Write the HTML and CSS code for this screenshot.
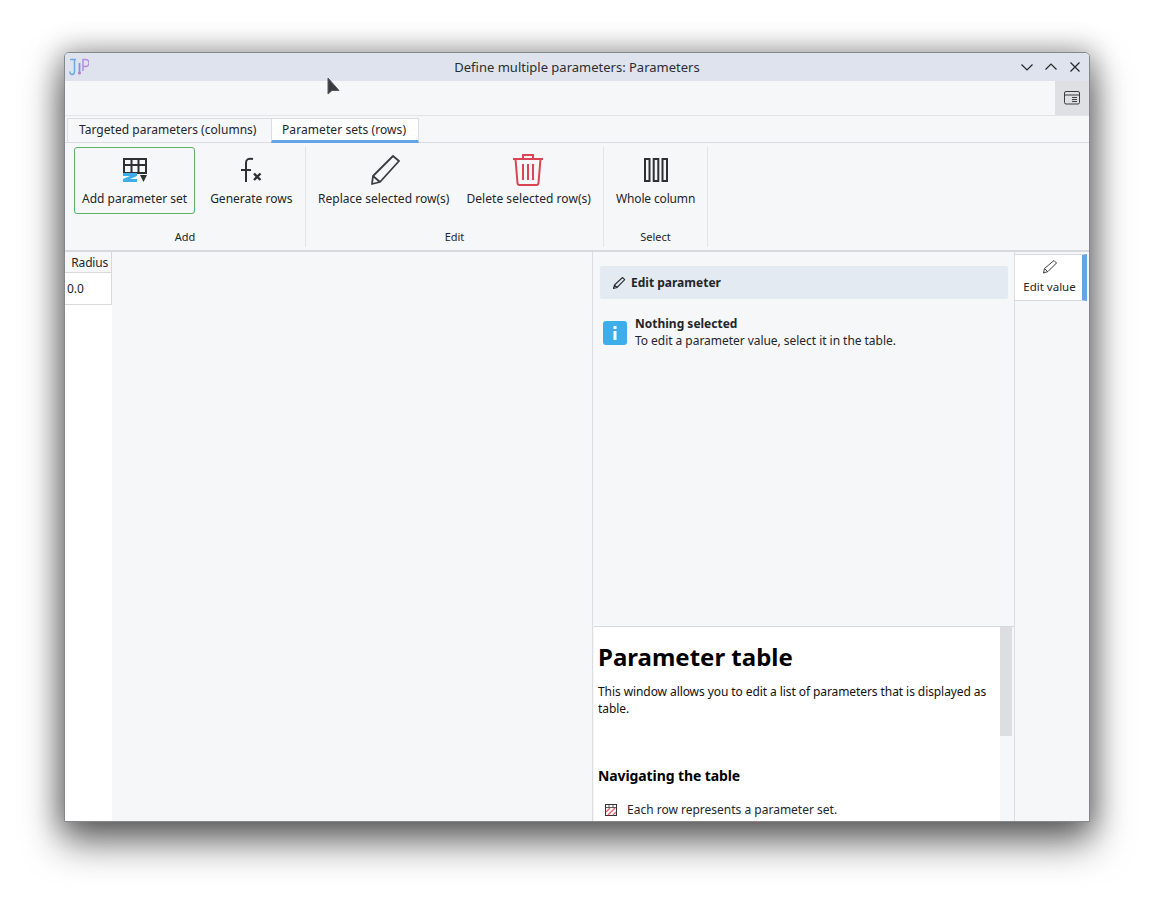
FILE: index.html
```html
<!DOCTYPE html>
<html lang="en">
<head>
<meta charset="utf-8">
<title>Define multiple parameters: Parameters</title>
<link rel="stylesheet" href="styles.css">
</head>
<body>
<div class="window">
  <header class="titlebar">
    <svg class="logo" viewBox="0 0 20 18" width="20" height="18" fill="none" stroke-width="1.500">
      <path d="M1 1.500h6M5.500 1.500v11.500q0 3.500-2.300 3.500T1 13.500" stroke="#6aa9ea"/>
      <path d="M10.500 5v9" stroke="#8f8fe0" stroke-width="1.800"/><circle cx="10.500" cy="15" r="1.500" fill="#b07ad8"/>
      <path d="M14 13V1.500h2.500a3.500 3.500 0 0 1 0 7H14" stroke="#b78ce0"/>
    </svg>
    <span class="title">Define multiple parameters: Parameters</span>
    <div class="winbtns">
      <svg viewBox="0 0 12 12" width="12" height="12"><path d="M.5 3.500 6 9l5.500-5.500" class="wb"/></svg>
      <svg viewBox="0 0 12 12" width="12" height="12"><path d="M.5 8.500 6 3l5.500 5.500" class="wb"/></svg>
      <svg viewBox="0 0 12 12" width="12" height="12"><path d="M1.500 1.500l9 9M10.500 1.500l-9 9" class="wb"/></svg>
    </div>
  </header>
  <div class="strip">
    <div class="stripbtn">
      <svg viewBox="0 0 16 14" width="16" height="14" fill="none" stroke="#3a3d42"><rect x=".5" y=".5" width="15" height="12.500" rx="1.500"/><path d="M.5 4h15M8 6.500h5M8 8.500h5M8 10.500h5"/></svg>
    </div>
  </div>
  <nav class="tabs">
    <div class="tab tab-cols">Targeted parameters (columns)</div>
    <div class="tab tab-rows">Parameter sets (rows)</div>
  </nav>
  <section class="ribbon">
    <div class="group group-add">
      <div class="btns">
        <div class="rbtn selected">
          <svg class="ic" viewBox="0 0 32 32" width="32" height="32">
            <path d="M5 5h22v14H5zM5 11h22M12.500 5v14M19.500 5v14" fill="none" stroke="#2e3033" stroke-width="2"/>
            <path d="M4 19h14v3l-7 3h7v3H4v-3l7-3H4z" fill="#3daee9"/>
            <path d="M21 21h7l-3.500 7z" fill="#2e3033"/>
          </svg>
          <span>Add parameter set</span>
        </div>
        <div class="rbtn">
          <svg class="ic" viewBox="0 0 32 32" width="32" height="32" fill="none" stroke="#2e3033" stroke-width="2">
            <path d="M18 5q-7-1.500-7 4V28M6 16h10"/><path d="M19 19.500l6.500 6.500M25.500 19.500L19 26" stroke-width="2.400"/>
          </svg>
          <span>Generate rows</span>
        </div>
      </div>
      <div class="glabel">Add</div>
    </div>
    <div class="group group-edit">
      <div class="btns">
        <div class="rbtn">
          <svg class="ic" viewBox="0 0 32 32" width="32" height="32" fill="none" stroke="#3a3c40" stroke-width="1.800" stroke-linejoin="round">
            <path d="M25 2l6 5L12 28l-8 2 1-8zM5 22l7 6"/>
          </svg>
          <span>Replace selected row(s)</span>
        </div>
        <div class="rbtn">
          <svg class="ic" viewBox="0 0 32 32" width="32" height="32" fill="none" stroke="#da4453" stroke-width="2">
            <path d="M0 5h30M2.500 5l2 24q.2 2 2 2h17q1.800 0 2-2l2-24M10 5V1h10v4M10 10v16M15 10v16M20 10v16"/>
          </svg>
          <span>Delete selected row(s)</span>
        </div>
      </div>
      <div class="glabel">Edit</div>
    </div>
    <div class="group group-select">
      <div class="btns">
        <div class="rbtn">
          <svg class="ic" viewBox="0 0 32 32" width="32" height="32" fill="none" stroke="#2e3033" stroke-width="2">
            <path d="M5 5h4.500v22H5zM13.700 5h4.600v22h-4.600zM22.500 5H27v22h-4.500z"/>
          </svg>
          <span class="whole">Whole column</span>
        </div>
      </div>
      <div class="glabel">Select</div>
    </div>
  </section>
  <main class="content">
    <div class="tablecol">
      <div class="th">Radius</div>
      <div class="td">0.0</div>
    </div>
    <div class="blank"></div>
    <div class="rightpanel">
      <div class="editpane">
        <div class="edithead">
          <svg viewBox="0 0 14 14" width="14" height="14" fill="none" stroke="#2e3033" stroke-width="1.100" stroke-linejoin="round"><path d="M10.500 1.500l2.200 2.200L5 11.500l-3.500 1 1-3.500zM2.500 9l2.500 2.500"/></svg>
          <span>Edit parameter</span>
        </div>
        <div class="notice">
          <div class="info">
            <svg viewBox="0 0 24 24" width="24" height="24"><rect width="24" height="24" rx="3" fill="#3daee9"/><rect x="10.500" y="10" width="3" height="9" fill="#fff"/><rect x="10.500" y="5" width="3" height="3" fill="#fff"/></svg>
          </div>
          <div class="noticetext">
            <strong>Nothing selected</strong>
            <span class="noticebody">To edit a parameter value, select it in the table.</span>
          </div>
        </div>
      </div>
      <div class="help">
        <div class="helpbody">
          <h1>Parameter table</h1>
          <p>This window allows you to edit a list of parameters that is displayed as table.</p>
          <h2>Navigating the table</h2>
          <div class="li">
            <svg viewBox="0 0 12 12" width="12" height="12"><rect x=".5" y=".5" width="11" height="11" fill="#fff" stroke="#333"/><path d="M.5 3.500h11M4 .5v3M8 .5v3" stroke="#333" stroke-width=".8"/><path d="M1 8l4-4M3 11l7-7M8 11l3-3" stroke="#e8566a" stroke-width="1.300"/></svg>
            <span>Each row represents a parameter set.</span>
          </div>
        </div>
        <div class="scroll"><div class="thumb"></div></div>
      </div>
    </div>
    <aside class="sidebar">
      <div class="sidetab">
        <svg viewBox="0 0 16 16" width="16" height="16" fill="none" stroke="#3a3c40" stroke-linejoin="round"><path d="M12 1.500l2.500 2.500-8.500 8.500-4.500 1.500 1-4.500zM2.800 9.800l3 3"/></svg>
        <span>Edit value</span>
      </div>
    </aside>
  </main>
  <svg class="cursor" viewBox="0 0 14 20" width="14" height="20"><path d="M1 1v16l4-3.500h7z" fill="#3a3c40" stroke="#55585c" stroke-width="1"/></svg>
</div>
</body>
</html>
```

FILE: styles.css
```css
* { box-sizing: border-box; }
html, body { margin: 0; height: 100%; background: #fff; overflow: hidden; }
body { padding: 52px 0 0 64px; font: 12px/16px "Noto Sans", sans-serif; color: #232629; }

.window {
  position: relative;
  width: 1026px;
  height: 770px;
  display: flex;
  flex-direction: column;
  background: #f6f7f9;
  border: 1px solid #85878b;
  border-radius: 5px 5px 0 0;
  box-shadow: 0 18px 38px 2px rgba(0,0,0,.58), 0 0 26px 4px rgba(0,0,0,.25);
}

.titlebar {
  flex: 0 0 28px;
  display: flex;
  align-items: center;
  position: relative;
  background: #dee3ed;
  border-radius: 4px 4px 0 0;
  padding-left: 4px;
}
.logo { flex: none; }
.title {
  position: absolute;
  left: 0; right: 0;
  text-align: center;
  font-size: 13px;
  color: #2b2e31;
}
.winbtns { margin-left: auto; display: flex; gap: 12px; padding-right: 8px; position: relative; }
.wb { fill: none; stroke: #232629; stroke-width: 1.200; }

.strip { flex: 0 0 35px; display: flex; justify-content: flex-end; border-bottom: 1px solid #e3e4e6; }
.stripbtn { width: 34px; display: flex; align-items: center; justify-content: center; background: #dfe0e3; }

.tabs { flex: 0 0 25px; display: flex; padding: 2px 0 0 2px; align-items: stretch; position: relative; }
.tab {
  line-height: 21px;
  border: 1px solid #dcdde0;
  border-bottom: 0;
  background: #f6f7f9;
}
.tab-cols { width: 204px; border-right: 0; padding-left: 11px; letter-spacing: .03px; }
.tab-rows { width: 148px; padding-left: 10px; background: #fff; border-bottom: 3px solid #64a5e8; margin-bottom: -1px; letter-spacing: .08px; }

.ribbon {
  flex: 0 0 110px;
  display: flex;
  border-top: 1px solid #dcdde0;
  border-bottom: 2px solid #d8d9dc;
  padding-top: 3px;
}
.group {
  display: flex;
  flex-direction: column;
  border-right: 1px solid #e3e4e6;
  height: 101px;
}
.group-add { width: 241px; }
.group-add .btns { padding-left: 9px; }
.group-edit { width: 298px; }
.group-select { width: 104px; }
.btns { display: flex; flex: 1; }
.rbtn {
  display: flex;
  flex-direction: column;
  align-items: center;
  padding: 6px 8px 0;
  height: 67px;
  margin-top: 1px;
  border: 1px solid transparent;
  border-radius: 3px;
  white-space: nowrap;
}
.group-add .rbtn + .rbtn { margin-left: 6px; }
.group-edit .rbtn { margin-left: 3px; letter-spacing: .02px; }
.group-edit .rbtn + .rbtn { margin-left: -1px; letter-spacing: .05px; }
.group-select .rbtn { margin-left: 3px; }
.whole { letter-spacing: -.15px; }
.rbtn.selected { border-color: #5cb25f; padding: 6px 7px 0; }
.rbtn .ic { flex: none; margin-bottom: 5px; }
.glabel { font-size: 11px; text-align: center; padding-bottom: 2px; line-height: 16px; }

.content { flex: 1; display: flex; min-height: 0; }
.tablecol { width: 47px; background: #fff; }
.th {
  height: 21px;
  text-align: right;
  padding-right: 3px;
  letter-spacing: -.2px;
  line-height: 22px;
  background: #f6f7f9;
  border-right: 1px solid #d8d9dc;
  border-bottom: 1px solid #d8d9dc;
}
.td {
  height: 32px;
  line-height: 32px;
  padding-left: 2px;
  border-right: 1px solid #d8d9dc;
  border-bottom: 1px solid #d8d9dc;
}
.blank { width: 480px; }

.rightpanel {
  width: 423px;
  display: flex;
  flex-direction: column;
  border-left: 1px solid #dcdde0;
  border-right: 1px solid #dcdde0;
}
.editpane { flex: 1; padding: 14px 6px 0 7px; }
.edithead {
  display: flex;
  align-items: center;
  gap: 5px;
  height: 33px;
  padding-left: 12px;
  background: #e4eaf2;
  border-radius: 2px;
  font-weight: 700;
}
.notice { display: flex; gap: 8px; padding: 16px 0 0 3px; }
.info { flex: none; margin-top: 6px; height: 24px; }
.noticetext { display: flex; flex-direction: column; line-height: 17px; }
.noticetext strong { font-weight: 700; }
.noticebody { letter-spacing: -.04px; }

.help {
  flex: 0 0 195px;
  display: flex;
  margin-left: 1px;
  border-top: 1px solid #d8d9dc;
  overflow: hidden;
}
.helpbody { flex: 0 0 406px; background: #fff; padding: 0 4px; }
.helpbody h1 { margin: 13px 0 0; font: 700 24px/34px "Noto Sans", sans-serif; color: #000; }
.helpbody p { margin: 9px 0 0; line-height: 17px; width: 395px; color: #111; letter-spacing: -.08px; }
.helpbody h2 { margin: 49px 0 0; font: 700 14px/20px "Noto Sans", sans-serif; color: #000; letter-spacing: -.1px; }
.li { display: flex; align-items: center; gap: 10px; margin-top: 16px; padding-left: 7px; }
.scroll { flex: 0 0 12px; }
.thumb { height: 109px; background: #dddee1; }

.sidebar { flex: 1; padding-top: 2px; }
.sidetab {
  width: 72px;
  height: 47px;
  display: flex;
  flex-direction: column;
  align-items: center;
  padding: 4px 0 0 2px;
  background: #fff;
  border-right: 5px solid #64a5e8;
  border-bottom: 1px solid #d8d9dc;
  border-top: 1px solid #d8d9dc;
  font-size: 11.500px;
  line-height: 16px;
  gap: 4px;
}

.cursor { position: absolute; left: 262px; top: 24px; }
```
